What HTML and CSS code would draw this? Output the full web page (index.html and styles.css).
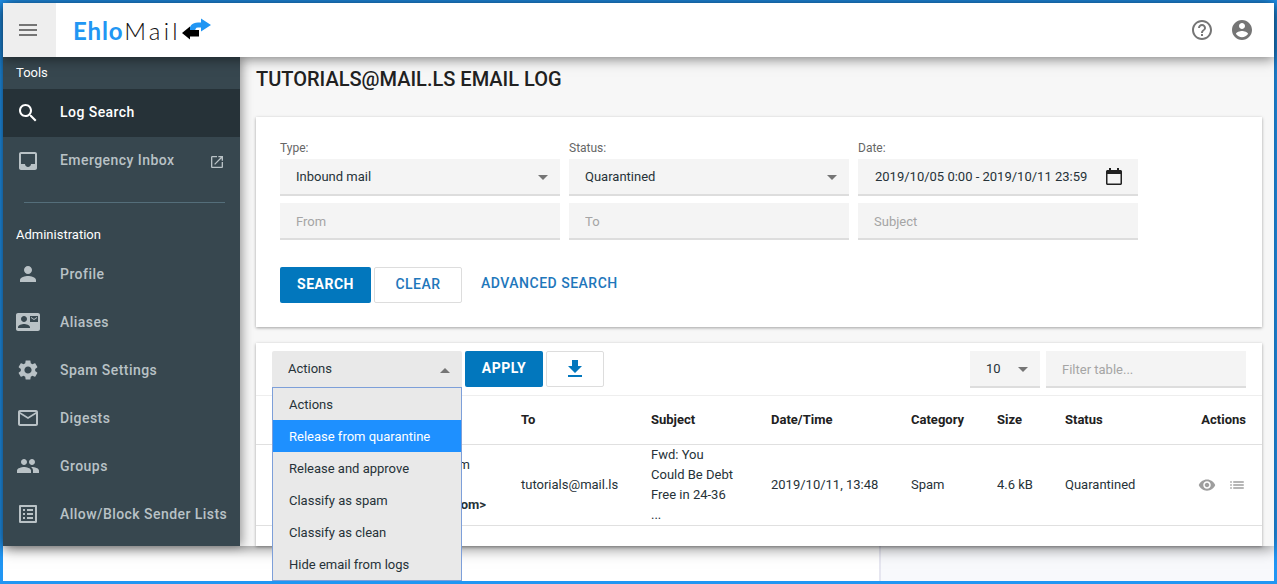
FILE: index.html
```html
<!DOCTYPE html>
<html lang="en">
<head>
  <meta charset="UTF-8">
  <title>EhloMail - Email Log</title>
  <link rel="stylesheet" href="styles.css">
</head>
<body>
  <div class="frame">
    <div class="app">
      <header class="topbar">
        <button class="menu-btn">
          <svg class="icon" viewBox="0 0 24 24"><path d="M3 18h18v-2H3v2zm0-5h18v-2H3v2zm0-7v2h18V6H3z"/></svg>
        </button>
        <div class="logo">
          <span class="logo-ehlo">Ehlo</span><span class="logo-mail">Mail</span>
          <svg class="logo-arrows" viewBox="0 0 32 24">
            <path fill="#2196f3" d="M9 15.500C9 9 12 5.500 18 5.500h3v-4L31 8l-10 6.500v-4h-3c-2.500 0-3 2-3 5z"/>
            <path fill="#000" d="M2 16l8-6.500V13h9v6.500h-9v3z"/>
          </svg>
        </div>
        <div class="topbar-icons">
          <svg class="icon" viewBox="0 0 24 24"><path d="M11 18h2v-2h-2v2zm1-16C6.480 2 2 6.480 2 12s4.480 10 10 10 10-4.480 10-10S17.520 2 12 2zm0 18c-4.410 0-8-3.590-8-8s3.590-8 8-8 8 3.590 8 8-3.590 8-8 8zm0-14c-2.210 0-4 1.790-4 4h2c0-1.100.9-2 2-2s2 .9 2 2c0 2-3 1.750-3 5h2c0-2.250 3-2.500 3-5 0-2.210-1.790-4-4-4z"/></svg>
          <svg class="icon" viewBox="0 0 24 24"><path d="M12 2C6.480 2 2 6.480 2 12s4.480 10 10 10 10-4.480 10-10S17.520 2 12 2zm0 3c1.660 0 3 1.340 3 3s-1.340 3-3 3-3-1.340-3-3 1.340-3 3-3zm0 14.200c-2.500 0-4.710-1.280-6-3.220.03-1.990 4-3.080 6-3.080 1.990 0 5.970 1.090 6 3.080-1.290 1.940-3.500 3.220-6 3.220z"/></svg>
        </div>
      </header>

      <div class="content">
        <nav class="sidebar">
          <div class="nav-title nav-title-top">Tools</div>
          <a class="nav-item active">
            <svg class="icon" viewBox="0 0 24 24"><path d="M15.500 14h-.79l-.28-.27C15.410 12.590 16 11.110 16 9.500 16 5.910 13.090 3 9.500 3S3 5.910 3 9.500 5.910 16 9.500 16c1.610 0 3.090-.59 4.230-1.570l.27.28v.79l5 4.990L20.490 19l-4.990-5zm-6 0C7.010 14 5 11.990 5 9.500S7.010 5 9.500 5 14 7.010 14 9.500 11.990 14 9.500 14z"/></svg>
            <span class="nav-label-top">Log Search</span>
          </a>
          <a class="nav-item">
            <svg class="icon" viewBox="0 0 24 24"><path d="M19 3H4.990c-1.110 0-1.980.89-1.980 2L3 19c0 1.100.88 2 1.990 2H19c1.100 0 2-.9 2-2V5c0-1.110-.9-2-2-2zm0 12h-4c0 1.660-1.350 3-3 3s-3-1.340-3-3H4.990V5H19v10z"/></svg>
            <span class="nav-label-top">Emergency Inbox</span>
            <svg class="icon-ext" viewBox="0 0 24 24"><path d="M19 19H5V5h7V3H5c-1.110 0-2 .9-2 2v14c0 1.100.89 2 2 2h14c1.100 0 2-.9 2-2v-7h-2v7zM14 3v2h3.590l-9.830 9.830 1.410 1.410L19 6.410V10h2V3h-7z"/></svg>
          </a>
          <div class="nav-divider"></div>
          <div class="nav-title">Administration</div>
          <a class="nav-item">
            <svg class="icon" viewBox="0 0 24 24"><path d="M12 12c2.210 0 4-1.790 4-4s-1.790-4-4-4-4 1.790-4 4 1.790 4 4 4zm0 2c-2.670 0-8 1.340-8 4v2h16v-2c0-2.660-5.330-4-8-4z"/></svg>
            Profile
          </a>
          <a class="nav-item">
            <svg class="icon" viewBox="0 0 24 24"><path d="M21 8V7l-3 2-3-2v1l3 2 3-2zm1-5H2C.9 3 0 3.900 0 5v14c0 1.100.9 2 2 2h20c1.100 0 1.990-.9 1.990-2L24 5c0-1.100-.9-2-2-2zM8 6c1.660 0 3 1.340 3 3s-1.340 3-3 3-3-1.340-3-3 1.340-3 3-3zm6 12H2v-1c0-2 4-3.100 6-3.100s6 1.100 6 3.100v1zm8-6h-8V6h8v6z"/></svg>
            Aliases
          </a>
          <a class="nav-item">
            <svg class="icon" viewBox="0 0 24 24"><path d="M19.140 12.940c.04-.3.06-.61.06-.94 0-.32-.02-.64-.07-.94l2.030-1.580c.18-.14.23-.41.12-.61l-1.920-3.320c-.12-.22-.37-.29-.59-.22l-2.390.96c-.5-.38-1.030-.7-1.620-.94l-.36-2.540c-.04-.24-.24-.41-.48-.41h-3.840c-.24 0-.43.17-.47.41l-.36 2.540c-.59.24-1.130.57-1.620.94l-2.390-.96c-.22-.08-.47 0-.59.22L2.740 8.870c-.12.21-.08.47.12.61l2.030 1.580c-.05.3-.09.63-.09.94s.02.64.07.94l-2.030 1.580c-.18.14-.23.41-.12.61l1.920 3.320c.12.22.37.29.59.22l2.390-.96c.5.38 1.030.7 1.620.94l.36 2.540c.05.24.24.41.48.41h3.840c.24 0 .44-.17.47-.41l.36-2.540c.59-.24 1.130-.56 1.620-.94l2.390.96c.22.08.47 0 .59-.22l1.920-3.320c.12-.22.07-.47-.12-.61l-2.010-1.580zM12 15.600c-1.980 0-3.600-1.620-3.600-3.600s1.620-3.600 3.600-3.600 3.600 1.620 3.600 3.600-1.620 3.600-3.600 3.600z"/></svg>
            Spam Settings
          </a>
          <a class="nav-item">
            <svg class="icon" viewBox="0 0 24 24"><path d="M20 4H4c-1.100 0-1.990.9-1.990 2L2 18c0 1.100.9 2 2 2h16c1.100 0 2-.9 2-2V6c0-1.100-.9-2-2-2zm0 14H4V8l8 5 8-5v10zm-8-7L4 6h16l-8 5z"/></svg>
            Digests
          </a>
          <a class="nav-item">
            <svg class="icon" viewBox="0 0 24 24"><path d="M16 11c1.660 0 2.990-1.340 2.990-3S17.660 5 16 5c-1.660 0-3 1.340-3 3s1.340 3 3 3zm-8 0c1.660 0 2.990-1.340 2.990-3S9.660 5 8 5C6.340 5 5 6.340 5 8s1.340 3 3 3zm0 2c-2.330 0-7 1.170-7 3.500V19h14v-2.500c0-2.330-4.670-3.500-7-3.500zm8 0c-.29 0-.62.02-.97.05 1.160.84 1.970 1.970 1.970 3.450V19h6v-2.500c0-2.330-4.670-3.500-7-3.500z"/></svg>
            Groups
          </a>
          <a class="nav-item">
            <svg class="icon" viewBox="0 0 24 24"><path d="M19 5v14H5V5h14m1.100-2H3.900c-.5 0-.9.4-.9.9v16.200c0 .4.4.9.9.9h16.200c.4 0 .9-.5.9-.9V3.900c0-.5-.5-.9-.9-.9zM11 7h6v2h-6V7zm0 4h6v2h-6v-2zm0 4h6v2h-6v-2zM7 7h2v2H7V7zm0 4h2v2H7v-2zm0 4h2v2H7v-2z"/></svg>
            Allow/Block Sender Lists
          </a>
        </nav>

        <main class="main">
          <h1 class="page-title">TUTORIALS@MAIL.LS EMAIL LOG</h1>

          <section class="card search-card">
            <div class="filters">
              <div class="filter-col">
                <label class="filter-label">Type:</label>
                <div class="field select-field">Inbound mail<span class="caret"></span></div>
                <input class="field" type="text" placeholder="From">
              </div>
              <div class="filter-col">
                <label class="filter-label">Status:</label>
                <div class="field select-field">Quarantined<span class="caret"></span></div>
                <input class="field" type="text" placeholder="To">
              </div>
              <div class="filter-col">
                <label class="filter-label">Date:</label>
                <div class="field select-field date-field">2019/10/05 0:00 - 2019/10/11 23:59
                  <svg class="icon-cal" viewBox="0 0 16 17"><path d="M3 0h2v2h6V0h2v2h1.500c.8 0 1.500.7 1.500 1.500v12c0 .8-.7 1.500-1.500 1.500h-13C.7 17 0 16.300 0 15.500v-12C0 2.700.7 2 1.500 2H3V0zM1.500 6v9.500h13V6h-13z"/></svg>
                </div>
                <input class="field" type="text" placeholder="Subject">
              </div>
            </div>
            <div class="search-actions">
              <button class="btn btn-primary btn-search">SEARCH</button>
              <button class="btn btn-outline btn-clear">CLEAR</button>
              <a class="advanced-link">ADVANCED SEARCH</a>
            </div>
          </section>

          <section class="card log-card">
            <div class="toolbar">
              <div class="actions-select">
                <div class="actions-current">Actions<span class="caret caret-up"></span></div>
                <ul class="actions-menu">
                  <li>Actions</li>
                  <li class="selected">Release from quarantine</li>
                  <li>Release and approve</li>
                  <li>Classify as spam</li>
                  <li>Classify as clean</li>
                  <li>Hide email from logs</li>
                </ul>
              </div>
              <button class="btn btn-primary btn-apply">APPLY</button>
              <button class="btn btn-outline btn-download">
                <svg class="icon" viewBox="0 0 24 24"><path d="M19 9h-4V3H9v6H5l7 7 7-7zM5 18v2h14v-2H5z"/></svg>
              </button>
              <div class="field select-field per-page">10<span class="caret"></span></div>
              <input class="field filter-table" type="text" placeholder="Filter table...">
            </div>
            <div class="table-wrap">
              <table class="log-table">
                <thead>
                  <tr>
                    <th class="col-from"></th>
                    <th class="col-to">To</th>
                    <th class="col-subject">Subject</th>
                    <th class="col-date">Date/Time</th>
                    <th class="col-category">Category</th>
                    <th class="col-size">Size</th>
                    <th class="col-status">Status</th>
                    <th class="col-actions">Actions</th>
                  </tr>
                </thead>
                <tbody>
                  <tr>
                    <td class="from-cell"><div class="from-name">m</div><div>&nbsp;</div><strong>om&gt;</strong></td>
                    <td>tutorials@mail.ls</td>
                    <td>Fwd: You<br>Could Be Debt<br>Free in 24-36<br>...</td>
                    <td>2019/10/11, 13:48</td>
                    <td>Spam</td>
                    <td>4.6 kB</td>
                    <td>Quarantined</td>
                    <td class="row-icons">
                      <svg class="icon-row" viewBox="0 0 24 24"><path d="M12 4.500C7 4.500 2.730 7.610 1 12c1.730 4.390 6 7.500 11 7.500s9.270-3.110 11-7.500c-1.730-4.390-6-7.500-11-7.500zM12 17c-2.760 0-5-2.240-5-5s2.240-5 5-5 5 2.240 5 5-2.240 5-5 5zm0-8c-1.660 0-3 1.340-3 3s1.340 3 3 3 3-1.340 3-3-1.340-3-3-3z"/></svg>
                      <svg class="icon-row" viewBox="0 0 24 24"><path d="M3 13h2v-2H3v2zm0 4h2v-2H3v2zm0-8h2V7H3v2zm4 4h14v-2H7v2zm0 4h14v-2H7v2zM7 7v2h14V7H7z"/></svg>
                    </td>
                  </tr>
                </tbody>
              </table>
            </div>
          </section>
        </main>
      </div>
    </div>

    <div class="below">
      <div class="below-left"></div>
      <div class="below-right"></div>
    </div>
  </div>
</body>
</html>
```

FILE: styles.css
```css
* {
  box-sizing: border-box;
}
html, body {
  margin: 0;
  height: 100%;
  overflow: hidden;
}
body {
  font-family: Roboto, "Liberation Sans", sans-serif;
  font-size: 13px;
  color: #263238;
  background: #fff;
}
.frame {
  height: 584px;
  border: 3px solid #2196f3;
  display: flex;
  flex-direction: column;
}
.app {
  height: 543px;
  display: flex;
  flex-direction: column;
  position: relative;
  z-index: 1;
  box-shadow: 0 2px 14px rgba(0, 0, 0, 0.5);
}

/* top bar */
.topbar {
  height: 54px;
  flex: none;
  display: flex;
  align-items: center;
  background: #fff;
  position: relative;
  z-index: 3;
  box-shadow: 0 2px 12px rgba(0, 0, 0, 0.5);
}
.icon {
  width: 24px;
  height: 24px;
  flex: none;
  fill: currentColor;
  display: block;
}
.menu-btn {
  width: 53px;
  height: 54px;
  border: none;
  padding: 0 4px 0 0;
  background: #eee;
  color: #757575;
  display: flex;
  align-items: center;
  justify-content: center;
}
.logo {
  margin-left: 17px;
  display: flex;
  align-items: center;
  height: 54px;
  font-family: Lato, sans-serif;
  font-size: 24px;
}
.logo-ehlo {
  color: #2196f3;
  font-weight: 700;
  letter-spacing: 0.8px;
}
.logo-mail {
  color: #111;
  font-weight: 300;
  letter-spacing: 3.2px;
  margin-left: 1px;
}
.logo-arrows {
  width: 32px;
  height: 24px;
  margin: -3px 0 0 -1px;
}
.topbar-icons {
  margin-left: auto;
  margin-right: 20px;
  display: flex;
  gap: 16px;
  color: #757575;
}

/* sidebar */
.content {
  flex: 1;
  min-height: 0;
  display: flex;
}
.sidebar {
  width: 237px;
  flex: none;
  background: #37474f;
  color: #b9c2c6;
  position: relative;
  z-index: 2;
  box-shadow: 2px 0 10px rgba(0, 0, 0, 0.4);
  overflow: hidden;
}
.nav-title {
  height: 32px;
  padding-left: 13px;
  display: flex;
  align-items: center;
  color: #fff;
  font-size: 13px;
}
.nav-title-top {
  padding-bottom: 2px;
}
.nav-item {
  height: 48px;
  padding: 0 16px 0 13px;
  display: flex;
  align-items: center;
  gap: 20px;
  font-size: 14px;
  font-weight: 500;
  letter-spacing: 0.45px;
  white-space: nowrap;
}
.nav-item.active {
  background: #263238;
  color: #fff;
}
.nav-label-top {
  margin-bottom: 2px;
}
.icon-ext {
  width: 16px;
  height: 16px;
  margin: 2px -1px 0 auto;
  fill: currentColor;
}
.nav-divider {
  height: 1px;
  margin: 17px 15px 15px 21px;
  background: #546e7a;
}

/* main */
.main {
  flex: 1;
  min-width: 0;
  background: #f7f7f7;
  padding: 10px 12px 0 16px;
  display: flex;
  flex-direction: column;
}
.page-title {
  margin: 0 0 26px;
  font-size: 20px;
  line-height: 24px;
  font-weight: 500;
  color: #212121;
}
.card {
  background: #fff;
  box-shadow: 0 1px 3px rgba(0, 0, 0, 0.35);
}
.search-card {
  flex: none;
  padding: 24px 24px 24px;
  margin-bottom: 16px;
}
.filters {
  display: flex;
  gap: 9px;
}
.filter-col {
  width: 280px;
  display: flex;
  flex-direction: column;
  gap: 7px;
}
.filter-label {
  font-size: 12px;
  line-height: 14px;
  color: #666;
  margin-bottom: -3px;
}
.field {
  height: 37px;
  background: #f4f4f4;
  border: none;
  border-bottom: 2px solid #ddd;
  padding: 0 16px;
  font-family: inherit;
  font-size: 13px;
  color: #263238;
  outline: none;
  width: 100%;
}
input.field {
  padding-top: 2px;
}
.field::placeholder {
  color: #a5a5a5;
  opacity: 1;
}
.select-field {
  display: flex;
  align-items: center;
  justify-content: space-between;
}
.date-field {
  padding-left: 17px;
}
.caret {
  width: 0;
  height: 0;
  margin: 2px -4px 0 0;
  border-left: 5px solid transparent;
  border-right: 5px solid transparent;
  border-top: 5px solid #757575;
}
.caret-up {
  border-top: none;
  border-bottom: 5px solid #757575;
  margin: 4px 0 0;
}
.icon-cal {
  width: 16px;
  height: 17px;
  fill: #212121;
}
.search-actions {
  margin-top: 27px;
  display: flex;
  align-items: center;
}
.btn {
  height: 36px;
  padding: 0 0 2px;
  border-radius: 2px;
  font-family: inherit;
  font-size: 14px;
  font-weight: 500;
  letter-spacing: 0.5px;
}
.btn-primary {
  background: #0277bd;
  border: none;
  color: #fff;
  font-weight: 700;
}
.btn-outline {
  background: #fff;
  border: 1px solid #ddd;
  color: #1f77bb;
}
.btn-search {
  width: 91px;
}
.btn-clear {
  width: 88px;
  margin-left: 3px;
}
.advanced-link {
  margin: -4px 0 0 19px;
  font-size: 14px;
  font-weight: 500;
  letter-spacing: 0.5px;
  color: #1f77bb;
}

/* log table */
.log-card {
  flex: 1;
  min-height: 0;
  display: flex;
  flex-direction: column;
}
.toolbar {
  flex: none;
  display: flex;
  align-items: flex-start;
  padding: 8px 16px 7px;
  border-bottom: 1px solid #eee;
}
.actions-select {
  width: 190px;
  position: relative;
  z-index: 4;
}
.actions-current {
  height: 36px;
  padding: 0 12px 2px 16px;
  display: flex;
  align-items: center;
  justify-content: space-between;
  background: #e9e9e9;
  border-radius: 2px 2px 0 0;
}
.actions-menu {
  position: absolute;
  top: 36px;
  left: 0;
  width: 100%;
  margin: 0;
  padding: 0;
  list-style: none;
  background: #e9e9e9;
  border: 1px solid #7d9fd9;
}
.actions-menu li {
  height: 32px;
  line-height: 33px;
  padding-left: 16px;
}
.actions-menu li.selected {
  background: #1e90ff;
  color: #fff;
}
.btn-apply {
  width: 78px;
  margin-left: 3px;
}
.btn-download {
  width: 58px;
  margin-left: 3px;
  padding: 0;
  color: #0277bd;
  display: flex;
  align-items: center;
  justify-content: center;
}
.per-page {
  width: 70px;
  margin-left: auto;
}
.filter-table {
  width: 200px;
  margin-left: 6px;
}
.table-wrap {
  flex: 1;
  min-height: 0;
  overflow: hidden;
}
.log-table {
  width: 100%;
  border-collapse: collapse;
  table-layout: fixed;
}
.log-table th {
  height: 48px;
  padding: 0;
  text-align: left;
  font-weight: 700;
  color: #212121;
  border-bottom: 1px solid #e0e0e0;
}
.log-table td {
  height: 80px;
  padding: 0;
  line-height: 20px;
  border-bottom: 1px solid #e0e0e0;
}
.col-from { width: 265px; }
.col-to { width: 130px; }
.col-subject { width: 120px; }
.col-date { width: 140px; }
.col-category { width: 86px; }
.col-size { width: 68px; }
.col-status { width: 100px; }
.log-table .col-actions {
  text-align: right;
  padding-right: 16px;
}
.log-table .from-cell {
  text-align: right;
  padding-right: 35px;
}
.from-name {
  padding-right: 16px;
}
.log-table .row-icons {
  text-align: right;
  padding-right: 16px;
  white-space: nowrap;
  font-size: 0;
}
.icon-row {
  width: 18px;
  height: 18px;
  fill: #9e9e9e;
  vertical-align: middle;
  margin-left: 12px;
}

/* page behind the app */
.below {
  flex: 1;
  display: flex;
}
.below-left {
  width: 876px;
  background: #fff;
}
.below-right {
  flex: 1;
  background: #f8f9fc;
  border-left: 2px solid #e6e6f0;
}
```
